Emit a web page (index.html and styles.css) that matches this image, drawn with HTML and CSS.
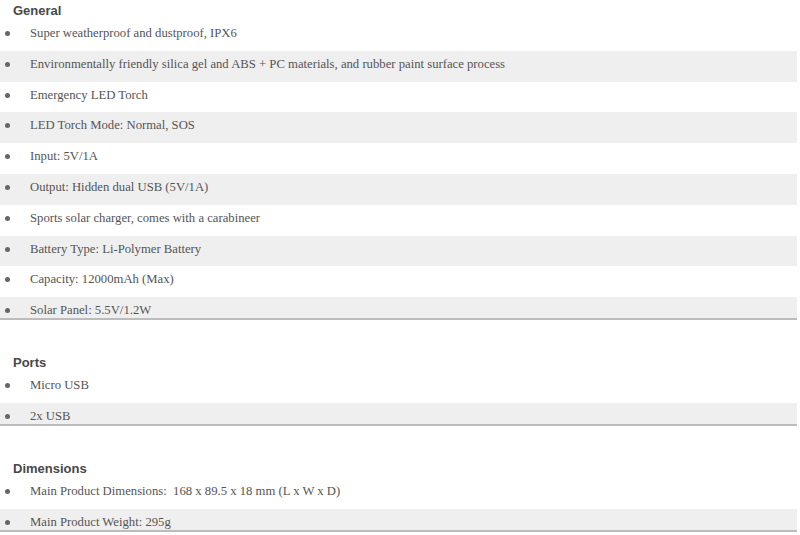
FILE: index.html
```html
<!DOCTYPE html>
<html>
<head>
<meta charset="utf-8">
<link rel="stylesheet" href="styles.css">
</head>
<body>
<div class="spec">
  <section class="group">
    <h3 class="group-title">General</h3>
    <ul class="rows">
      <li>Super weatherproof and dustproof, IPX6</li>
      <li>Environmentally friendly silica gel and ABS + PC materials, and rubber paint surface process</li>
      <li>Emergency LED Torch</li>
      <li>LED Torch Mode: Normal, SOS</li>
      <li>Input: 5V/1A</li>
      <li>Output: Hidden dual USB (5V/1A)</li>
      <li>Sports solar charger, comes with a carabineer</li>
      <li>Battery Type: Li-Polymer Battery</li>
      <li>Capacity: 12000mAh (Max)</li>
      <li>Solar Panel: 5.5V/1.2W</li>
    </ul>
  </section>
  <section class="group">
    <h3 class="group-title">Ports</h3>
    <ul class="rows">
      <li>Micro USB</li>
      <li>2x USB</li>
    </ul>
  </section>
  <section class="group">
    <h3 class="group-title">Dimensions</h3>
    <ul class="rows">
      <li>Main Product Dimensions:&nbsp; 168 x 89.5 x 18 mm (L x W x D)</li>
      <li>Main Product Weight: 295g</li>
    </ul>
  </section>
</div>
</body>
</html>
```

FILE: styles.css
```css
html, body {
  margin: 0;
  padding: 0;
  background: #ffffff;
}

.spec {
  width: 797px;
  display: flex;
  flex-direction: column;
  gap: 32px;
}

.group-title {
  margin: 0;
  height: 20px;
  line-height: 21px;
  padding-left: 13px;
  font-family: "Liberation Sans", Arial, sans-serif;
  font-size: 13px;
  font-weight: bold;
  color: #484848;
}

.rows {
  list-style: none;
  margin: 0;
  padding: 0;
  border-bottom: 2px solid #bcbcbc;
}

.rows li {
  position: relative;
  padding: 6px 0 9.8px 30px;
  line-height: 15px;
  font-family: "Liberation Serif", "Times New Roman", serif;
  font-size: 12.7px;
  color: #555555;
}

.rows li:nth-child(even) {
  background: #efefef;
}

.rows li:last-child {
  padding-bottom: 0;
}

.rows li::before {
  content: "";
  position: absolute;
  left: 5px;
  top: 11px;
  width: 5px;
  height: 5px;
  border-radius: 50%;
  background: #666666;
}
```
